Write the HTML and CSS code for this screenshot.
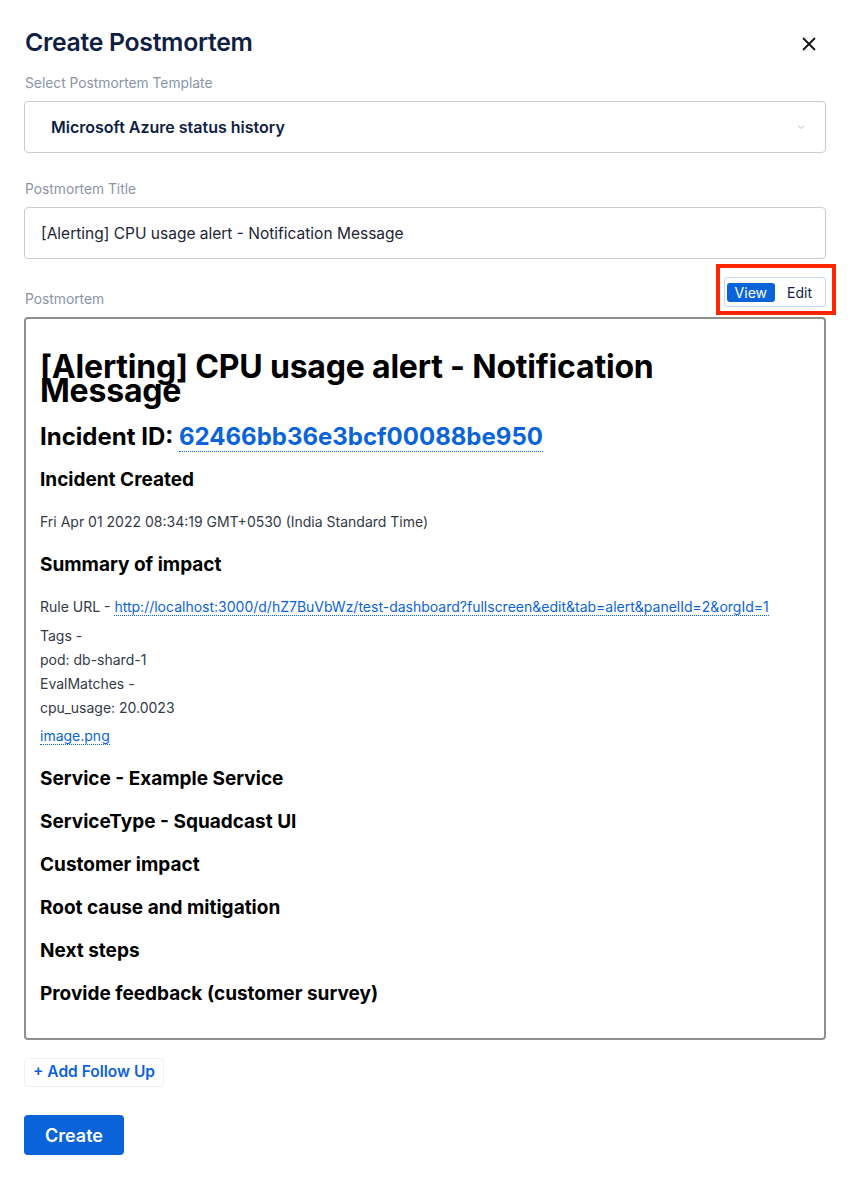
FILE: index.html
```html
<!DOCTYPE html>
<html>
<head>
<meta charset="utf-8">
<link rel="stylesheet" href="styles.css">
</head>
<body>
<div class="modal">
  <div class="header">
    <h2 class="title">Create Postmortem</h2>
    <svg class="close" width="16" height="16" viewBox="0 0 16 16"><path d="M2 2L14 14M14 2L2 14" stroke="#111" stroke-width="1.8" fill="none"/></svg>
  </div>
  <div class="label">Select Postmortem Template</div>
  <div class="select">
    <span>Microsoft Azure status history</span>
    <svg width="8" height="6" viewBox="0 0 8 6"><path d="M1 1.5L4 4.5L7 1.5" stroke="#b8bec9" stroke-width="1" fill="none"/></svg>
  </div>
  <div class="label l2">Postmortem Title</div>
  <div class="input">[Alerting] CPU usage alert - Notification Message</div>
  <div class="pm-row">
    <div class="label l3">Postmortem</div>
    <div class="toggle-wrap">
      <div class="toggle">
        <span class="tbtn active">View</span>
        <span class="tbtn">Edit</span>
      </div>
    </div>
  </div>
  <div class="editor">
    <h1 class="h1">[Alerting] CPU usage alert - Notification Message</h1>
    <h2 class="h2">Incident ID: <a class="link">62466bb36e3bcf00088be950</a></h2>
    <h3 class="h3 first">Incident Created</h3>
    <p class="p">Fri Apr 01 2022 08:34:19 GMT+0530 (India Standard Time)</p>
    <h3 class="h3">Summary of impact</h3>
    <p class="p">Rule URL - <a class="link">http://localhost:3000/d/hZ7BuVbWz/test-dashboard?fullscreen&amp;edit&amp;tab=alert&amp;panelId=2&amp;orgId=1</a></p>
    <p class="p tags">Tags -</p>
    <p class="p tight">pod: db-shard-1</p>
    <p class="p tight">EvalMatches -</p>
    <p class="p tight">cpu_usage: 20.0023</p>
    <p class="p img"><a class="link">image.png</a></p>
    <h3 class="h3 s">Service - Example Service</h3>
    <h3 class="h3 s">ServiceType - Squadcast UI</h3>
    <h3 class="h3 s">Customer impact</h3>
    <h3 class="h3 s">Root cause and mitigation</h3>
    <h3 class="h3 s">Next steps</h3>
    <h3 class="h3 s">Provide feedback (customer survey)</h3>
  </div>
  <div class="follow">+ Add Follow Up</div>
  <div class="create">Create</div>
</div>
</body>
</html>
```

FILE: styles.css
```css
* { box-sizing: border-box; }
body {
  margin: 0;
  background: #fff;
  font-family: Inter, Roboto, "Noto Sans", sans-serif;
  color: #0f1e43;
}
.modal {
  padding: 27px 29px 0 24px;
}
.header {
  display: flex;
  justify-content: space-between;
  align-items: center;
  padding-left: 1px;
  height: 30px;
}
.title {
  margin: 0;
  font-size: 24.8px;
  font-weight: 600;
  color: #0f1e43;
  letter-spacing: -0.3px;
}
.close { margin-right: 9px; margin-top: 3px; }
.label {
  font-size: 13.8px;
  color: #8a94a6;
  margin: 18px 0 0 1px;
  line-height: 16px;
}
.select {
  margin-top: 10px;
  height: 52px;
  border: 1px solid #c9ced6;
  border-radius: 4px;
  display: flex;
  align-items: center;
  justify-content: space-between;
  padding: 0 20px 0 26px;
  font-size: 16px;
  font-weight: 600;
  color: #0f1e43;
}
.l2 { margin-top: 28px; }
.input {
  margin-top: 10px;
  height: 52px;
  border: 1px solid #c9ced6;
  border-radius: 4px;
  display: flex;
  align-items: center;
  padding: 0 16px;
  font-size: 15.5px;
  color: #1d2433;
}
.pm-row {
  display: flex;
  justify-content: space-between;
  align-items: flex-end;
  margin-top: 5px;
}
.l3 { margin: 0 0 10px 1px; }
.toggle-wrap {
  border: 4px solid #ff2600;
  padding: 9px 6px 4px 4px;
  margin-right: -10px;
  margin-bottom: 2px;
}
.toggle {
  display: flex;
  border: 1px solid #c8d7f2;
  border-radius: 3px;
  padding: 5px 5px 4px 2px;
  gap: 4px;
}
.tbtn {
  font-size: 14px;
  line-height: 19px;
  padding: 0 8px;
  border-radius: 3px;
  color: #0f1e43;
}
.tbtn.active {
  background: #0b63d9;
  color: #fff;
}
.editor {
  border: 2px solid #8f8f8f;
  border-radius: 4px;
  padding: 36px 14px 24px 14px;
  height: 723px;
  color: #000;
}
.h1 {
  margin: 0;
  font-size: 32px;
  font-weight: 700;
  line-height: 24px;
  letter-spacing: -0.2px;
  max-width: 700px;
}
.h2 {
  margin: 19px 0 0 0;
  font-size: 24px;
  line-height: 30px;
  font-weight: 700;
}
.link {
  color: #0b63d9;
  border-bottom: 1px dotted #0b63d9;
  text-decoration: none;
}
.h3 {
  margin: 22px 0 0 0;
  font-size: 19px;
  font-weight: 700;
  line-height: 24px;
}
.h3.first { margin-top: 16px; }
.p {
  margin: 21px 0 0 0;
  font-size: 14px;
  line-height: 18px;
  color: #333a47;
}
.tags { margin-top: 11px; }
.tight { margin-top: 6px; }
.img { margin-top: 10px; }
.h3.s + .h3.s { margin-top: 19px; }
.follow {
  display: inline-block;
  margin-top: 18px;
  border: 1px solid #eef0f3;
  border-radius: 4px;
  padding: 3px 8px 4px 8px;
  font-size: 15.5px;
  font-weight: 600;
  color: #0b63d9;
  line-height: 20px;
}
.create {
  width: 100px;
  height: 40px;
  margin-top: 28px;
  background: #0b63d9;
  color: #fff;
  border-radius: 4px;
  font-size: 18px;
  font-weight: 600;
  display: flex;
  align-items: center;
  justify-content: center;
}
```
